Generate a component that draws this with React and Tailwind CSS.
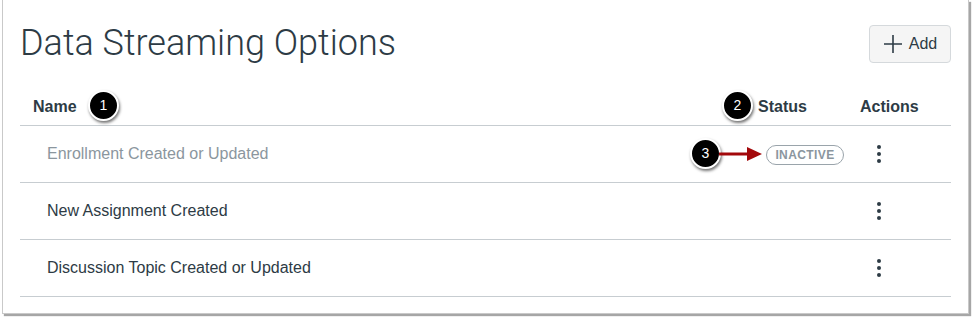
const ROWS = [
  { name: 'Enrollment Created or Updated', inactive: true },
  { name: 'New Assignment Created' },
  { name: 'Discussion Topic Created or Updated' },
]

function Badge({ n, className }) {
  return (
    <div
      className={`absolute w-[31px] h-[31px] rounded-full bg-black border-2 border-white shadow-[1px_2px_3px_rgba(0,0,0,0.55)] flex items-center justify-center text-white text-[14px] ${className}`}
    >
      {n}
    </div>
  )
}

function Kebab() {
  return (
    <div className="flex flex-col gap-[3px]">
      <span className="w-[4px] h-[4px] rounded-full bg-[#2d3b45]" />
      <span className="w-[4px] h-[4px] rounded-full bg-[#2d3b45]" />
      <span className="w-[4px] h-[4px] rounded-full bg-[#2d3b45]" />
    </div>
  )
}

export default function App() {
  return (
    <div className="w-[972px] h-[319px] bg-white font-['Liberation_Sans',Arial,sans-serif] text-[#2d3b45]">
      <div className="relative ml-[2px] w-[967px] h-[314px] border-l border-r border-b border-[#c9c9c9] shadow-[2px_2px_1px_rgba(0,0,0,0.35)] px-[17px] pt-[22px]">
        {/* Title bar */}
        <div className="h-[44px] flex items-center justify-between">
          <h1 className="font-['Roboto',sans-serif] font-light text-[36px] leading-none text-[#2d3b45] -mt-[2px]">
            Data Streaming Options
          </h1>
          <button className="w-[82px] h-[38px] rounded-[4px] bg-[#f5f5f5] border border-[#d5d9dc] flex items-center justify-center gap-[6px] text-[16px] text-[#2d3b45]">
            <svg width="20" height="20" viewBox="0 0 20 20" stroke="#2d3b45" strokeWidth="1.6">
              <path d="M10 1v18M1 10h18" />
            </svg>
            Add
          </button>
        </div>

        {/* Table header */}
        <div className="mt-[20px] h-[40px] pt-[3px] flex items-center border-b border-[#c7cdd1] font-bold text-[16px]">
          <div className="flex-1 pl-[13px]">Name</div>
          <div className="w-[102px] pl-[10px]">Status</div>
          <div className="w-[101px] pl-[10px]">Actions</div>
        </div>

        {ROWS.map(row => (
          <div key={row.name} className="h-[57px] flex items-center border-b border-[#c7cdd1] text-[16px]">
            <div className={`flex-1 pl-[27px] ${row.inactive ? 'text-[#8b969e]' : ''}`}>{row.name}</div>
            <div className="w-[102px] pl-[18px]">
              {row.inactive && (
                <span className="inline-flex items-center justify-center w-[78px] h-[20px] rounded-full border border-[#9aa4ab] text-[12px] font-bold tracking-[0.4px] text-[#8b969e]">
                  INACTIVE
                </span>
              )}
            </div>
            <div className="w-[101px] pl-[27px]">
              <Kebab />
            </div>
          </div>
        ))}

        {/* Annotation callouts */}
        <Badge n="1" className="left-[85px] top-[90px]" />
        <Badge n="2" className="left-[719px] top-[90px]" />
        <Badge n="3" className="left-[687px] top-[138px]" />
        <svg className="absolute left-[716px] top-[145px]" width="48" height="18" viewBox="0 0 48 18">
          <path d="M0 9h30" stroke="#a3080b" strokeWidth="3" />
          <path d="M28 2l15 7-15 7z" fill="#a3080b" />
        </svg>
      </div>
    </div>
  )
}
